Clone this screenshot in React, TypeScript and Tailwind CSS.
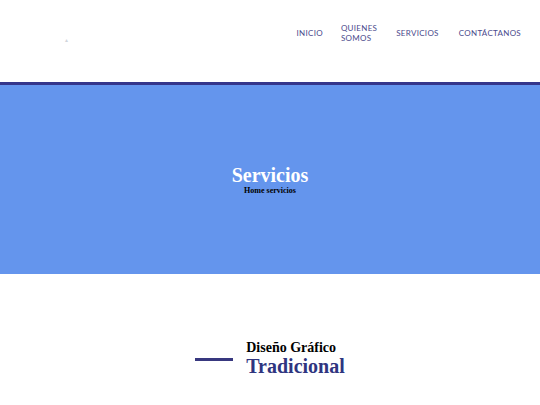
import React from "react";

export default function App() {
  return (
    <div className="w-[540px] bg-white">
      {/* Header */}
      <header className="h-[85px] flex items-start border-b-[3px] border-[#35358a]">
        <div className="pl-[64px] pt-[38px] w-[280px]">
          <span className="block w-[5px] h-[6px] text-[5px] leading-none text-gray-300">▲</span>
        </div>
        <nav className="flex items-center ml-auto mr-[19px] mt-[23px] font-['Lato',sans-serif] text-[8px] leading-[10px] text-[#4a4a8c] tracking-[0.3px]">
          <a>INICIO</a>
          <a className="ml-[18px]">
            QUIENES
            <br />
            SOMOS
          </a>
          <a className="ml-[19px]">SERVICIOS</a>
          <a className="ml-[20px]">CONTÁCTANOS</a>
        </nav>
      </header>

      {/* Hero */}
      <section className="h-[189px] bg-[#6495ed] flex flex-col items-center justify-center font-['Liberation_Serif',serif]">
        <h1 className="text-white font-bold text-[20px] leading-[22px] mt-[-1px]">Servicios</h1>
        <p className="text-black font-bold text-[8px] leading-[9px] mt-[0px]">Home servicios</p>
      </section>

      {/* Content */}
      <section className="pt-[66px] flex justify-center font-['Liberation_Serif',serif]">
        <div className="flex items-center gap-[13px] ml-[0px]">
          <span className="block w-[38px] h-[3px] bg-[#38387f] mt-[2px]"></span>
          <div>
            <h3 className="text-[14px] leading-[16px] font-bold text-black">Diseño Gráfico</h3>
            <h2 className="text-[20px] leading-[21px] font-bold text-[#2f3580]">Tradicional</h2>
          </div>
        </div>
      </section>
    </div>
  );
}
